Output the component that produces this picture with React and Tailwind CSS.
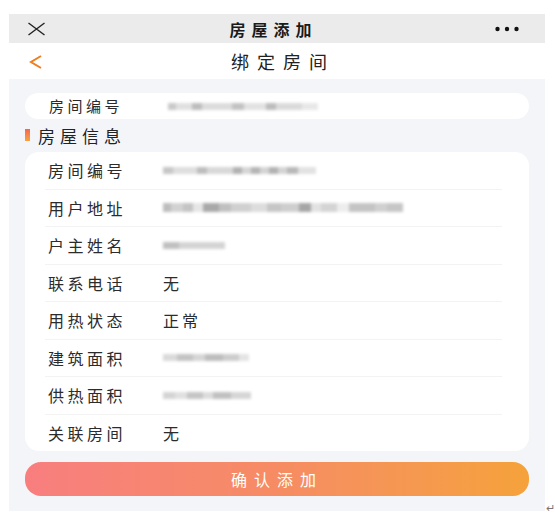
import { Fragment } from "react"

// blurred (masked) values, drawn as gray segments: [width, colour]
const masks = {
  pill: [[8, "#c9c9c9"], [16, "#e0e0e0"], [10, "#bdbdbd"], [30, "#dcdcdc"], [12, "#c2c2c2"], [22, "#e2e2e2"], [10, "#bcbcbc"], [26, "#dadada"], [16, "#e8e8e8"]],
  roomNo: [[10, "#c6c6c6"], [24, "#dedede"], [10, "#bdbdbd"], [26, "#d8d8d8"], [9, "#b2b2b2"], [9, "#d6d6d6"], [9, "#b5b5b5"], [9, "#d4d4d4"], [9, "#b2b2b2"], [9, "#d4d4d4"], [11, "#b8b8b8"], [18, "#e2e2e2"]],
  address: [[8, "#bdbdbd"], [12, "#d2d2d2"], [10, "#c4c4c4"], [10, "#e6e6e6"], [16, "#a9a9a9"], [12, "#c0c0c0"], [20, "#d0d0d0"], [16, "#dddddd"], [14, "#c6c6c6"], [18, "#cecece"], [12, "#a6a6a6"], [10, "#e2e2e2"], [16, "#d4d4d4"], [12, "#ededed"], [26, "#c4c4c4"], [12, "#d0d0d0"], [16, "#c6c6c6"]],
  owner: [[16, "#c0c0c0"], [46, "#d4d4d4"]],
  building: [[14, "#dadada"], [16, "#c4c4c4"], [12, "#d6d6d6"], [18, "#bdbdbd"], [16, "#cdcdcd"], [10, "#e4e4e4"]],
  heating: [[12, "#d4d4d4"], [12, "#e0e0e0"], [16, "#c5c5c5"], [10, "#dcdcdc"], [18, "#c0c0c0"], [20, "#d6d6d6"]],
}

const rows = [
  { label: "房间编号", mask: "roomNo" },
  { label: "用户地址", mask: "address" },
  { label: "户主姓名", mask: "owner" },
  { label: "联系电话", text: "无" },
  { label: "用热状态", text: "正常" },
  { label: "建筑面积", mask: "building" },
  { label: "供热面积", mask: "heating" },
  { label: "关联房间", text: "无" },
]

function Mask({ name, tall }) {
  return (
    <div className={`flex items-center blur-[1.5px] ${tall ? "h-[9px]" : "h-[7px]"}`}>
      {masks[name].map(([w, c], i) => (
        <span key={i} className="h-full" style={{ width: w, background: c }} />
      ))}
    </div>
  )
}

function InfoRow({ row }) {
  return (
    <div className="flex h-[36.5px] items-center pl-[23px]">
      <span className="w-[115px] shrink-0 text-[16px] tracking-[3.5px] text-[#2b2b2b]">{row.label}</span>
      {row.text ? (
        <span className="text-[16px] tracking-[3px] text-[#2b2b2b]">{row.text}</span>
      ) : (
        <Mask name={row.mask} tall={row.mask === "address"} />
      )}
    </div>
  )
}

export default function App() {
  return (
    <div className="flex min-h-[523px] items-end bg-white pt-[14px] pl-[9px] font-['Noto_Sans_CJK_SC','Noto_Sans',sans-serif]">
      <div className="flex w-[536px] flex-col self-start">
        {/* top bar */}
        <div className="flex h-[29px] items-center justify-between bg-[#ebebeb] pl-[18px] pr-[26px]">
          <svg width="19" height="14" viewBox="0 0 19 14">
            <path d="M1.5 1 L17.5 13 M17.5 1 L1.5 13" stroke="#222" strokeWidth="1.4" fill="none" />
          </svg>
          <span className="pl-[6px] text-[16px] font-bold tracking-[6px] text-[#1a1a1a]">房屋添加</span>
          <svg width="24" height="6" viewBox="0 0 24 6">
            <circle cx="2.5" cy="3" r="2.2" fill="#111" />
            <circle cx="12" cy="3" r="2.2" fill="#111" />
            <circle cx="21.5" cy="3" r="2.2" fill="#111" />
          </svg>
        </div>

        {/* nav bar */}
        <div className="relative flex h-[36px] items-center justify-center bg-white">
          <svg className="absolute left-[19px] top-[11px]" width="16" height="16" viewBox="0 0 16 16">
            <path d="M13 2 L3 8 L13 14" stroke="#f07c1c" strokeWidth="2" fill="none" strokeLinejoin="miter" />
          </svg>
          <span className="pl-[12px] text-[18px] tracking-[8px] text-[#222]">绑定房间</span>
        </div>

        {/* content */}
        <div className="flex flex-col bg-[#f4f5f9] px-4 pt-[14px] pb-[15px]">
          <div className="flex h-[26px] items-center rounded-full bg-white pl-[24px]">
            <span className="w-[119px] shrink-0 text-[15px] tracking-[3.5px] text-[#2b2b2b]">房间编号</span>
            <Mask name="pill" />
          </div>

          <div className="mt-[8px] flex h-[16px] items-center">
            <span className="h-[12px] w-[5px] bg-gradient-to-b from-[#f5644f] to-[#f7a33a]" />
            <span className="ml-[8px] text-[17px] leading-none tracking-[5px] text-[#222]">房屋信息</span>
          </div>

          <div className="mt-[9px] rounded-[14px] bg-white">
            {rows.map((row, i) => (
              <Fragment key={row.label}>
                {i > 0 && <div className="ml-[20px] mr-[27px] h-px bg-[#f3f3f3]" />}
                <InfoRow row={row} />
              </Fragment>
            ))}
          </div>

          <button className="mt-[11px] h-[34px] rounded-[16px] bg-gradient-to-r from-[#f87e7f] via-[#f68c63] to-[#f5a23a] text-[16px] tracking-[7px] text-white">
            确认添加
          </button>
        </div>
      </div>
      <span className="mb-[8px] ml-[1px] text-[11px] text-[#777]">↵</span>
    </div>
  )
}
